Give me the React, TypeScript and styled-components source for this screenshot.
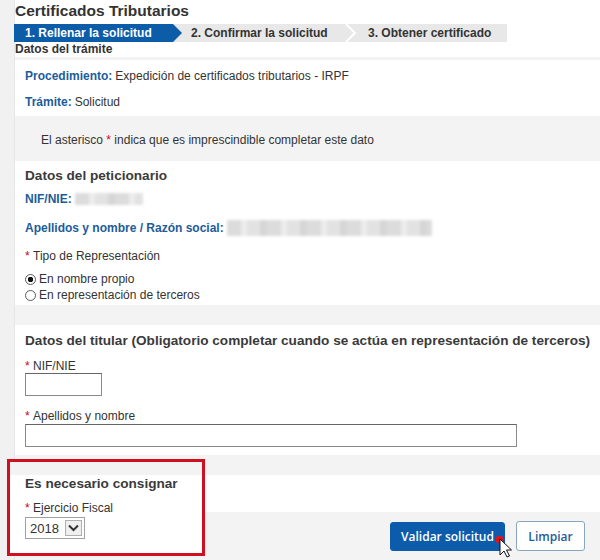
import React from "react";
import styled, { createGlobalStyle } from "styled-components";

const GlobalStyle = createGlobalStyle`
    html, body {
        margin: 0;
        padding: 0;
        background: #f1f1f1;
    }
    body {
        font-family: "Liberation Sans", Arial, sans-serif;
        font-size: 12px;
        color: #333;
    }
`;

const Page = styled.div`
    display: flex;
    width: 600px;
    height: 560px;
    padding-left: 14px;
    box-sizing: border-box;
    overflow: hidden;
    background: #f1f1f1;
`;

const Main = styled.div`
    flex: 1;
    min-width: 0;
    display: flex;
    flex-direction: column;
    background: #f3f3f3;
    border-left: 1px solid #e6e6e6;
`;

const Header = styled.div`
    background: #fff;
    height: 57px;
`;

const Title = styled.h1`
    margin: 0;
    height: 22px;
    line-height: 22px;
    font-size: 15.5px;
    font-weight: bold;
    color: #333;
`;

const StepBar = styled.div`
    display: flex;
    align-items: center;
    width: 493px;
    height: 18px;
    margin: 2px 0 0 -1px;
    background: #e8e8e8;
    font-weight: bold;
    font-size: 12px;
    line-height: 18px;
    white-space: nowrap;
`;

const Step = styled.div<{ $active?: boolean; $w?: number; $pl: number }>`
    height: 18px;
    padding-left: ${(p) => p.$pl}px;
    width: ${(p) => (p.$w ? `${p.$w}px` : "auto")};
    box-sizing: border-box;
    color: ${(p) => (p.$active ? "#fff" : "#333")};
    background: ${(p) => (p.$active ? "#0d5ca8" : "transparent")};
    clip-path: ${(p) =>
        p.$active
            ? "polygon(0 0, calc(100% - 9px) 0, 100% 50%, calc(100% - 9px) 100%, 0 100%)"
            : "none"};
`;

const Chevron = () => (
    <svg width="12" height="18" viewBox="0 0 12 18" style={{ display: "block" }}>
        <polyline points="1,0 10,9 1,18" fill="none" stroke="#fff" strokeWidth="2" />
    </svg>
);

const SubTitle = styled.div`
    font-weight: bold;
    line-height: 15px;
    color: #333;
`;

const Panel = styled.div<{ $pt: number; $pb: number }>`
    background: #fff;
    padding: ${(p) => p.$pt}px 10px ${(p) => p.$pb}px 10px;
`;

const Band = styled.div<{ $h: number }>`
    height: ${(p) => p.$h}px;
    flex-shrink: 0;
`;

const Note = styled.div`
    padding: 16px 0 13px 26px;
    line-height: 16px;
`;

const Line = styled.div<{ $mt?: number }>`
    line-height: 16px;
    margin-top: ${(p) => p.$mt ?? 0}px;
    display: flex;
    align-items: center;
    white-space: pre;
`;

const Heading = styled.h2<{ $mt?: number }>`
    margin: ${(p) => p.$mt ?? 0}px 0 0 0;
    font-size: 13.6px;
    line-height: 18px;
    font-weight: bold;
    color: #3a3a3a;
    white-space: nowrap;
`;

const Label = styled.span`
    color: #1c5c9b;
    font-weight: bold;
    margin-right: 3px;
`;

const Req = styled.span`
    color: #d0021b;
`;

const Blur = styled.span<{ $w: number; $h: number }>`
    display: inline-block;
    width: ${(p) => p.$w}px;
    height: ${(p) => p.$h}px;
    background: repeating-linear-gradient(
        90deg,
        #dcdcdc 0 14px,
        #ececec 14px 20px,
        #e2e2e2 20px 33px,
        #d6d6d6 33px 40px
    );
    filter: blur(1.5px);
`;

const Radio = styled.span<{ $checked?: boolean }>`
    display: inline-block;
    width: 11px;
    height: 11px;
    margin-right: 3px;
    border: 1px solid #5a5a5a;
    border-radius: 50%;
    box-sizing: border-box;
    background: ${(p) =>
        p.$checked
            ? "radial-gradient(circle, #111 0 2.5px, #fff 3px)"
            : "#fff"};
`;

const Input = styled.div<{ $w: number; $mt?: number }>`
    width: ${(p) => p.$w}px;
    height: 23px;
    margin-top: ${(p) => p.$mt ?? 0}px;
    box-sizing: border-box;
    border: 1px solid #8a8a8a;
    border-top-color: #666;
    background: #fff;
`;

const Bottom = styled.div`
    flex: 1;
    display: flex;
    align-items: flex-start;
`;

const Highlight = styled.div`
    width: 198px;
    height: 97px;
    margin: 4px 0 0 -8px;
    box-sizing: border-box;
    border: 3px solid #d0101f;
    padding: 13px 0 0 15px;
    background: linear-gradient(#f3f3f3 0 13px, #fff 13px);
    flex-shrink: 0;
`;

const Select = styled.div`
    display: flex;
    align-items: center;
    width: 60px;
    height: 22px;
    margin-top: 1px;
    box-sizing: border-box;
    border: 1px solid #a0a0a0;
    background: #fff;
    font-size: 13px;
    padding-left: 4px;
    gap: 6px;
`;

const SelectArrow = styled.span`
    display: flex;
    align-items: center;
    justify-content: center;
    width: 17px;
    height: 16px;
    box-sizing: border-box;
    border: 1px solid #b0b0b0;
    background: #efefef;
`;

const RightCol = styled.div`
    flex: 1;
    align-self: stretch;
    display: flex;
    flex-direction: column;
`;

const WhiteStrip = styled.div`
    height: 37px;
    margin-top: 20px;
    background: #fff;
`;

const ButtonBar = styled.div`
    flex: 1;
    display: flex;
    justify-content: flex-end;
    align-items: flex-start;
    gap: 11px;
    padding: 9px 15px 0 0;
`;

const Button = styled.button<{ $primary?: boolean }>`
    position: relative;
    height: ${(p) => (p.$primary ? 29 : 30)}px;
    width: ${(p) => (p.$primary ? 115 : 69)}px;
    margin-top: ${(p) => (p.$primary ? 1 : 0)}px;
    border-radius: 3px;
    border: 1px solid ${(p) => (p.$primary ? "#0d5cab" : "#89a5c4")};
    background: ${(p) => (p.$primary ? "#0d5cab" : "#fff")};
    color: ${(p) => (p.$primary ? "#fff" : "#1f5c9c")};
    font-family: "Open Sans", "Liberation Sans", sans-serif;
    font-weight: 600;
    font-size: 12px;
    padding: 0;
    cursor: pointer;
`;

const Cursor = styled.span`
    position: absolute;
    left: 105px;
    top: 13px;
    width: 18px;
    height: 22px;
`;

export default function App() {
    return (
        <>
            <GlobalStyle />
            <Page>
                <Main>
                    <Header>
                        <Title>Certificados Tributarios</Title>
                        <StepBar>
                            <Step $active $w={168} $pl={11}>1. Rellenar la solicitud</Step>
                            <Step $w={163} $pl={9}>2. Confirmar la solicitud</Step>
                            <Chevron />
                            <Step $pl={11}>3. Obtener certificado</Step>
                        </StepBar>
                        <SubTitle>Datos del trámite</SubTitle>
                    </Header>
                    <Band $h={3} />
                    <Panel $pt={8} $pb={6}>
                        <Line>
                            <Label>Procedimiento:</Label>Expedición de certificados tributarios - IRPF
                        </Line>
                        <Line $mt={10}>
                            <Label>Trámite:</Label>Solicitud
                        </Line>
                    </Panel>
                    <Note>
                        El asterisco <Req>*</Req> indica que es imprescindible completar este dato
                    </Note>
                    <Panel $pt={6} $pb={2}>
                        <Heading>Datos del peticionario</Heading>
                        <Line $mt={6}>
                            <Label>NIF/NIE:</Label>
                            <Blur $w={68} $h={12} />
                        </Line>
                        <Line $mt={13}>
                            <Label>Apellidos y nombre / Razón social:</Label>
                            <Blur $w={205} $h={16} />
                        </Line>
                        <Line $mt={12}>
                            <Req>* </Req>Tipo de Representación
                        </Line>
                        <Line $mt={7}>
                            <Radio $checked />En nombre propio
                        </Line>
                        <Line>
                            <Radio />En representación de terceros
                        </Line>
                    </Panel>
                    <Band $h={20} />
                    <Panel $pt={7} $pb={8}>
                        <Heading>
                            Datos del titular (Obligatorio completar cuando se actúa en representación de terceros)
                        </Heading>
                        <Line $mt={8}>
                            <Req>* </Req>NIF/NIE
                        </Line>
                        <Input $w={77} $mt={-1} />
                        <Line $mt={12}>
                            <Req>* </Req>Apellidos y nombre
                        </Line>
                        <Input $w={492} />
                    </Panel>
                    <Bottom>
                        <Highlight>
                            <Heading>Es necesario consignar</Heading>
                            <Line $mt={7}>
                                <Req>* </Req>Ejercicio Fiscal
                            </Line>
                            <Select>
                                2018
                                <SelectArrow>
                                    <svg width="11" height="8" viewBox="0 0 11 8">
                                        <polyline points="1,1.5 5.5,6 10,1.5" fill="none" stroke="#333" strokeWidth="2" />
                                    </svg>
                                </SelectArrow>
                            </Select>
                        </Highlight>
                        <RightCol>
                            <WhiteStrip />
                            <ButtonBar>
                                <Button $primary>
                                    Validar solicitud
                                    <Cursor>
                                        <svg width="18" height="22" viewBox="0 0 18 22">
                                            <rect x="0" y="0" width="7" height="7" rx="1.5" fill="#e0101c" />
                                            <path
                                                d="M4 3 L4 19 L8 15 L11 21 L13.5 20 L10.5 14 L15.5 14 Z"
                                                fill="#fff"
                                                stroke="#111"
                                                strokeWidth="1"
                                                strokeLinejoin="round"
                                            />
                                        </svg>
                                    </Cursor>
                                </Button>
                                <Button>Limpiar</Button>
                            </ButtonBar>
                        </RightCol>
                    </Bottom>
                </Main>
            </Page>
        </>
    );
}
